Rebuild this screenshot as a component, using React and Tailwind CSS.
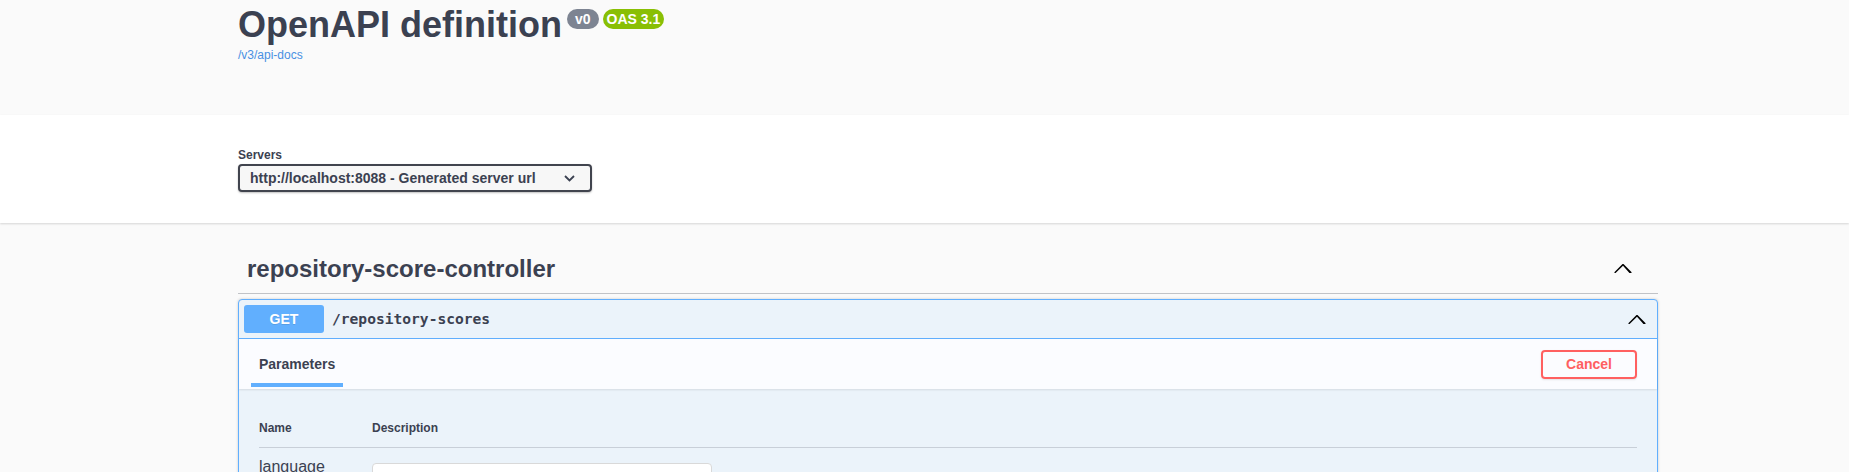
import React from "react";

function ArrowUp({ className }) {
  return (
    <svg className={className} width="20" height="20" viewBox="0 0 20 20" aria-hidden="true">
      <path
        fill="currentColor"
        d="M17.418 14.908c-.272.268-.709.268-.979 0L10 7.688l-7.418 7.22c-.27.268-.707.268-.979 0a.692.692 0 0 1 0-.969l7.908-7.83c.27-.268.707-.268.979 0l7.908 7.83c.27.268.27.701 0 .969z"
      />
    </svg>
  );
}

export default function App() {
  return (
    <div className="min-h-screen bg-[#fafafa] font-['Liberation_Sans',Arial,sans-serif] text-[#3b4151]">
      {/* Info header */}
      <div className="h-[115px] pl-[238px] pt-[4px]">
        <div className="flex items-start">
          <h2 className="text-[36px] font-bold leading-[41px] m-0">OpenAPI definition</h2>
          <span className="ml-[5px] mt-[5px] flex h-[20px] items-center rounded-full bg-[#7d8492] px-[8px] text-[14px] font-bold leading-none text-white">
            v0
          </span>
          <span className="ml-[4px] mt-[5px] flex h-[20px] items-center rounded-full bg-[#89bf04] px-[4px] text-[14px] font-bold leading-none text-white">
            OAS 3.1
          </span>
        </div>
        <a className="mt-[3px] block text-[12px] leading-[14px] text-[#4990e2]" href="#">
          /v3/api-docs
        </a>
      </div>

      {/* Servers */}
      <div className="h-[108px] bg-white pl-[238px] pt-[33px] shadow-[0_1px_2px_0_rgba(0,0,0,0.15)]">
        <div className="text-[12px] font-bold leading-[14px]">Servers</div>
        <div className="mt-[2px] flex h-[28px] w-[354px] items-center justify-between rounded-[4px] border-2 border-[#41444e] bg-[#f7f7f7] pl-[10px] pr-[15px] shadow-[0_1px_2px_0_rgba(0,0,0,0.25)]">
          <span className="text-[14px] font-bold leading-[16px]">http://localhost:8088 - Generated server url</span>
          <svg width="11" height="7" viewBox="0 0 11 7" aria-hidden="true">
            <path d="M1 1l4.5 4.5L10 1" fill="none" stroke="#3b4151" strokeWidth="1.8" />
          </svg>
        </div>
      </div>

      {/* Tag section */}
      <div className="ml-[238px] w-[1420px] pt-[20px]">
        <div className="flex h-[51px] items-center justify-between border-b border-[#c1c3c7] pl-[9px] pr-[25px]">
          <h3 className="text-[24px] font-bold leading-[29px]">repository-score-controller</h3>
          <ArrowUp className="text-black" />
        </div>

        {/* Operation block */}
        <div className="mt-[5px] rounded-[4px] border border-[#61affe] bg-[#ebf3fa] shadow-[0_0_3px_rgba(0,0,0,0.19)]">
          <div className="flex items-center border-b border-[#61affe] p-[5px]">
            <div className="flex h-[28px] w-[80px] items-center justify-center rounded-[3px] bg-[#61affe] text-[14px] font-bold text-white [text-shadow:0_1px_0_rgba(0,0,0,0.1)]">
              GET
            </div>
            <div className="flex-1 pl-[8px] font-['DejaVu_Sans_Mono',monospace] text-[14.6px] font-bold leading-[20px] text-[#3b4151]">
              /repository-scores
            </div>
            <ArrowUp className="mr-[5px] text-black" />
          </div>

          <div className="flex h-[50px] items-center justify-between bg-[#fbfcff] px-[20px] shadow-[0_1px_2px_rgba(0,0,0,0.1)]">
            <div className="relative text-[14px] font-bold leading-[16px]">
              Parameters
              <span className="absolute left-[-10%] top-[27px] h-[4px] w-[120%] bg-[#61affe]" />
            </div>
            <button className="h-[29px] w-[96px] rounded-[4px] border-2 border-[#ff6060] bg-transparent text-[14px] font-bold text-[#ff6060] shadow-[0_1px_2px_rgba(0,0,0,0.1)]">
              Cancel
            </button>
          </div>

          <div className="px-[20px] pt-[20px] pb-[20px]">
            <div className="flex border-b border-[#c8cfd8] py-[12px] text-[12px] font-bold leading-[14px]">
              <div className="w-[113px]">Name</div>
              <div>Description</div>
            </div>
            <div className="flex pt-[10px]">
              <div className="w-[113px] text-[16px] leading-[18px]">language</div>
              <div>
                <div className="mt-[5px] h-[36px] w-[340px] rounded-[4px] border border-[#d9d9d9] bg-white" />
              </div>
            </div>
          </div>
        </div>
      </div>
    </div>
  );
}
